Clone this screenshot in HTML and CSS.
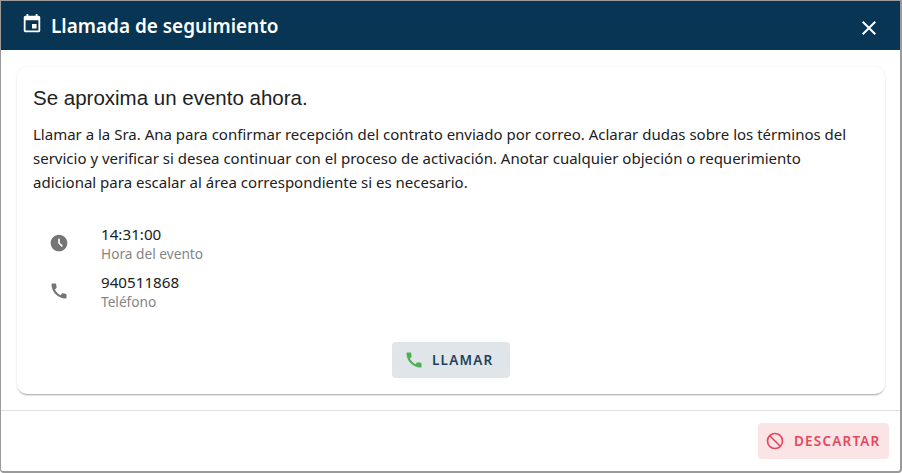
FILE: index.html
```html
<!DOCTYPE html>
<html lang="es">
<head>
  <meta charset="UTF-8" />
  <title>Llamada de seguimiento</title>
  <link rel="stylesheet" href="styles.css">
</head>
<body>
  <div class="dialog">
    <header class="dialog-header">
      <div class="dialog-title">
        <svg class="title-icon" viewBox="0 0 24 24"><path d="M17 12h-5v5h5v-5zM16 1v2H8V1H6v2H5c-1.11 0-1.99.9-1.99 2L3 19c0 1.1.89 2 2 2h14c1.1 0 2-.9 2-2V5c0-1.1-.9-2-2-2h-1V1h-2zm3 18H5V8h14v11z"/></svg>
        <h1>Llamada de seguimiento</h1>
      </div>
      <svg class="close-icon" viewBox="0 0 24 24"><path d="M19 6.41 17.59 5 12 10.59 6.41 5 5 6.41 10.59 12 5 17.59 6.41 19 12 13.41 17.59 19 19 17.59 13.41 12z"/></svg>
    </header>

    <div class="dialog-body">
      <div class="card">
        <h2 class="card-title">Se aproxima un evento ahora.</h2>
        <p class="card-text">Llamar a la Sra. Ana para confirmar recepción del contrato enviado por correo. Aclarar dudas sobre los términos del servicio y verificar si desea continuar con el proceso de activación. Anotar cualquier objeción o requerimiento adicional para escalar al área correspondiente si es necesario.</p>

        <div class="info-list">
          <div class="info-row">
            <svg class="info-icon" viewBox="0 0 24 24"><path d="M11.99 2C6.47 2 2 6.48 2 12s4.47 10 9.99 10C17.52 22 22 17.52 22 12S17.52 2 11.99 2zm3.3 14.71L11 12.41V7h2v4.59l3.71 3.71-1.42 1.41z"/></svg>
            <div>
              <div class="info-value">14:31:00</div>
              <div class="info-label">Hora del evento</div>
            </div>
          </div>
          <div class="info-row">
            <svg class="info-icon" viewBox="0 0 24 24"><path d="M20.01 15.38c-1.23 0-2.42-.2-3.53-.56a.977.977 0 0 0-1.01.24l-1.57 1.97c-2.83-1.35-5.48-3.9-6.89-6.83l1.95-1.66c.27-.28.35-.67.24-1.02-.37-1.11-.56-2.3-.56-3.53 0-.54-.45-.99-.99-.99H4.19C3.65 3 3 3.24 3 3.99 3 13.28 10.73 21 20.01 21c.71 0 .99-.63.99-1.18v-3.45c0-.54-.45-.99-.99-.99z"/></svg>
            <div>
              <div class="info-value">940511868</div>
              <div class="info-label">Teléfono</div>
            </div>
          </div>
        </div>

        <div class="card-actions">
          <button class="btn btn-call">
            <svg class="btn-icon" viewBox="0 0 24 24"><path d="M20.01 15.38c-1.23 0-2.42-.2-3.53-.56a.977.977 0 0 0-1.01.24l-1.57 1.97c-2.83-1.35-5.48-3.9-6.89-6.83l1.95-1.66c.27-.28.35-.67.24-1.02-.37-1.11-.56-2.3-.56-3.53 0-.54-.45-.99-.99-.99H4.19C3.65 3 3 3.24 3 3.99 3 13.28 10.73 21 20.01 21c.71 0 .99-.63.99-1.18v-3.45c0-.54-.45-.99-.99-.99z"/></svg>
            Llamar
          </button>
        </div>
      </div>
    </div>

    <footer class="dialog-footer">
      <button class="btn btn-dismiss">
        <svg class="btn-icon" viewBox="0 0 24 24"><circle cx="12" cy="12" r="9"/><line x1="5.7" y1="5.7" x2="18.3" y2="18.3"/></svg>
        Descartar
      </button>
    </footer>
  </div>
</body>
</html>
```

FILE: styles.css
```css
* {
  box-sizing: border-box;
}

body {
  margin: 0;
  background-color: #ffffff;
  font-family: 'Noto Sans', sans-serif;
  color: #212121;
}

.dialog {
  width: 902px;
  height: 473px;
  display: flex;
  flex-direction: column;
  border: 1px solid #9a9a9a;
  border-width: 1px 2px 2px 1px;
  border-radius: 0 0 4px 4px;
  overflow: hidden;
  background-color: #ffffff;
}

.dialog-header {
  height: 49px;
  display: flex;
  align-items: center;
  justify-content: space-between;
  padding: 0 20px;
  background-color: #073553;
  color: #ffffff;
}

.dialog-title {
  display: flex;
  align-items: center;
  gap: 8px;
}

.dialog-title h1 {
  margin: 0;
  font-size: 18.95px;
  font-weight: 600;
  line-height: 24px;
}

.title-icon {
  width: 22px;
  height: 22px;
  fill: #ffffff;
  margin-top: -3px;
}

.close-icon {
  width: 24px;
  height: 24px;
  fill: #ffffff;
  margin-top: 4px;
  margin-right: -1px;
}

.dialog-body {
  flex: 1;
  padding: 17px 15px 16px 16px;
  border-bottom: 1px solid #e0e0e0;
}

.card {
  height: 327px;
  padding: 16px;
  border-radius: 10px;
  background-color: #ffffff;
  box-shadow: 0 2px 2px -1px rgba(0, 0, 0, 0.35), 0 0 3px rgba(0, 0, 0, 0.08);
}

.card-title {
  margin: 3px 0 0;
  font-family: 'Liberation Sans', sans-serif;
  font-size: 20.5px;
  font-weight: 400;
  line-height: 24px;
}

.card-text {
  max-width: 830px;
  margin: 12px 0 0;
  font-size: 15px;
  line-height: 24px;
}

.info-list {
  margin-top: 25px;
}

.info-row {
  height: 48px;
  display: flex;
  align-items: center;
  gap: 32px;
  padding-left: 16px;
}

.info-icon {
  width: 20px;
  height: 20px;
  fill: #757575;
}

.info-value {
  font-size: 15.2px;
  line-height: 21px;
}

.info-label {
  font-size: 13.7px;
  line-height: 18px;
  color: #858585;
}

.card-actions {
  display: flex;
  justify-content: center;
  margin-top: 27px;
}

.btn {
  display: flex;
  align-items: center;
  gap: 8px;
  height: 36px;
  border: none;
  border-radius: 4px;
  font-family: 'Noto Sans', sans-serif;
  font-size: 13.5px;
  font-weight: 600;
  letter-spacing: 1.2px;
  text-transform: uppercase;
}

.btn-icon {
  width: 20px;
  height: 20px;
}

.btn-call {
  width: 118px;
  padding: 0 12px;
  background-color: #e0e5ea;
  color: #1c3f5c;
}

.btn-call .btn-icon {
  fill: #4caf50;
}

.dialog-footer {
  flex: 1;
  display: flex;
  justify-content: flex-end;
  align-items: flex-start;
  padding: 12px 11px 0 0;
}

.btn-dismiss {
  width: 131px;
  padding: 0 7px;
  gap: 9px;
  background-color: #fae4e6;
  color: #e5485c;
}

.btn-dismiss .btn-icon {
  fill: none;
  stroke: #e5485c;
  stroke-width: 2;
}
```
